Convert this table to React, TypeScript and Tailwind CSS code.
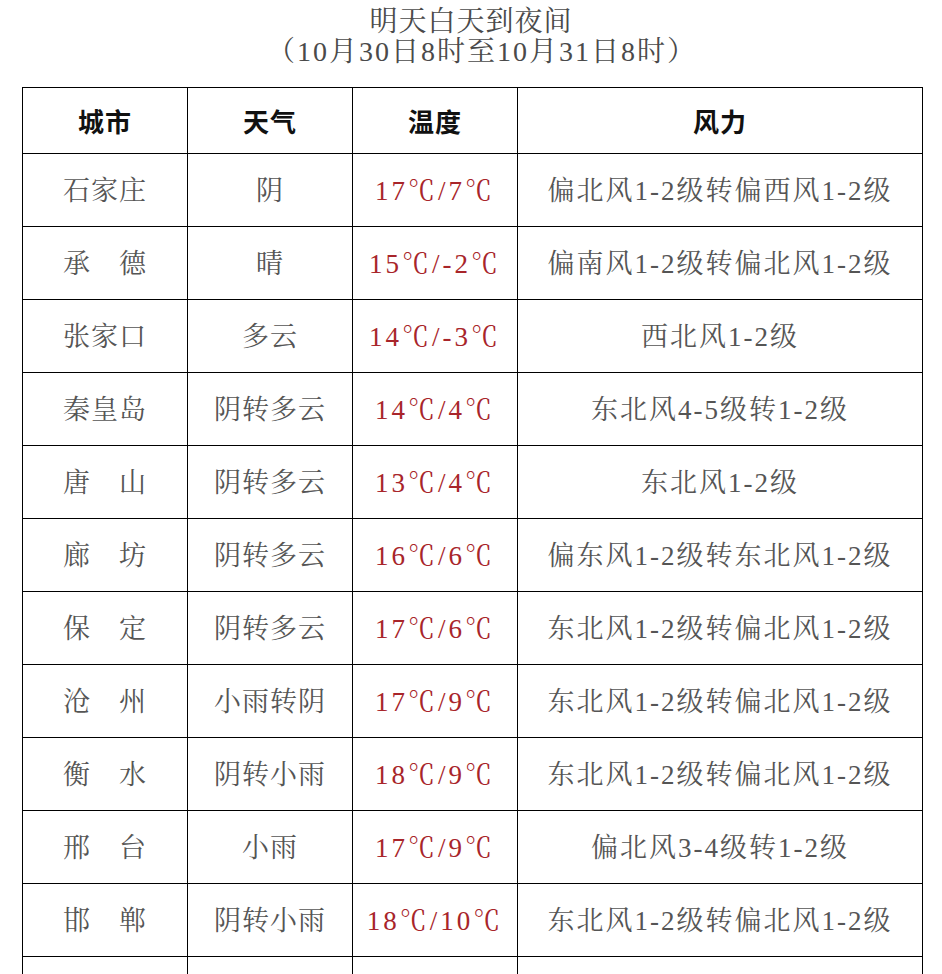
const rows = [
  { city: "石家庄", weather: "阴", temp: "17℃/7℃", wind: "偏北风1-2级转偏西风1-2级" },
  { city: "承　德", weather: "晴", temp: "15℃/-2℃", wind: "偏南风1-2级转偏北风1-2级" },
  { city: "张家口", weather: "多云", temp: "14℃/-3℃", wind: "西北风1-2级" },
  { city: "秦皇岛", weather: "阴转多云", temp: "14℃/4℃", wind: "东北风4-5级转1-2级" },
  { city: "唐　山", weather: "阴转多云", temp: "13℃/4℃", wind: "东北风1-2级" },
  { city: "廊　坊", weather: "阴转多云", temp: "16℃/6℃", wind: "偏东风1-2级转东北风1-2级" },
  { city: "保　定", weather: "阴转多云", temp: "17℃/6℃", wind: "东北风1-2级转偏北风1-2级" },
  { city: "沧　州", weather: "小雨转阴", temp: "17℃/9℃", wind: "东北风1-2级转偏北风1-2级" },
  { city: "衡　水", weather: "阴转小雨", temp: "18℃/9℃", wind: "东北风1-2级转偏北风1-2级" },
  { city: "邢　台", weather: "小雨", temp: "17℃/9℃", wind: "偏北风3-4级转1-2级" },
  { city: "邯　郸", weather: "阴转小雨", temp: "18℃/10℃", wind: "东北风1-2级转偏北风1-2级" },
  { city: "定　州", weather: "阴转多云", temp: "16℃/6℃", wind: "东北风1-2级" },
];

const font = {
  fontFamily: '"Liberation Serif", "Noto Serif CJK SC", "Noto Sans CJK SC", serif',
};

export default function App() {
  return (
    <div className="min-h-screen bg-white" style={font}>
      <div className="pt-[7px] text-center text-[28px] leading-[30px] text-[#4a4a4a]">
        <div className="tracking-[1px]">明天白天到夜间</div>
        <div className="pl-[22px] tracking-[2px]">（10月30日8时至10月31日8时）</div>
      </div>
      <table className="ml-[22px] mt-[20px] w-[901px] table-fixed border-collapse">
        <colgroup>
          <col className="w-[165px]" />
          <col className="w-[165px]" />
          <col className="w-[165px]" />
          <col />
        </colgroup>
        <thead>
          <tr className="h-[66px]">
            {["城市", "天气", "温度", "风力"].map((h) => (
              <th
                key={h}
                className="border border-black text-center text-[26px] font-semibold tracking-[1px] text-[#111]"
                style={{ fontFamily: '"Noto Sans CJK SC", serif' }}
              >
                {h}
              </th>
            ))}
          </tr>
        </thead>
        <tbody>
          {rows.map((r) => (
            <tr key={r.city} className="h-[73px]">
              <td className="border border-black pt-[3px] text-center text-[27px] tracking-[1px] text-[#555]">
                {r.city}
              </td>
              <td className="border border-black pt-[3px] text-center text-[27px] tracking-[1px] text-[#555]">
                {r.weather}
              </td>
              <td className="border border-black pt-[3px] text-center text-[27px] tracking-[3px] text-[#a8252a]">
                {r.temp}
              </td>
              <td className="border border-black pt-[3px] text-center text-[27px] tracking-[2px] text-[#555]">
                {r.wind}
              </td>
            </tr>
          ))}
        </tbody>
      </table>
    </div>
  );
}
